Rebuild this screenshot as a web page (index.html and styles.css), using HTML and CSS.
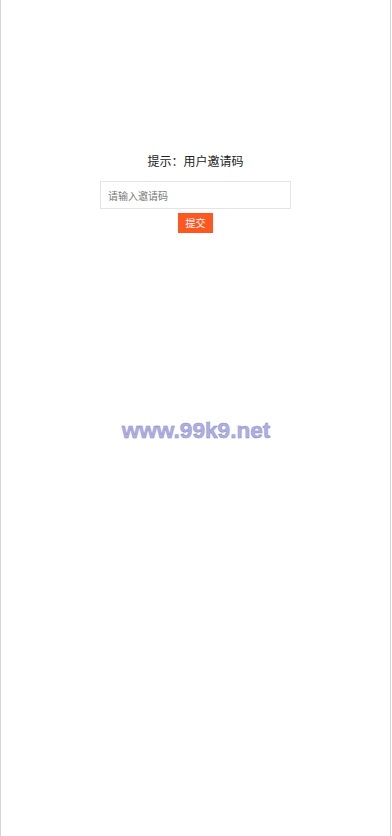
FILE: index.html
```html
<!DOCTYPE html>
<html lang="zh-CN">
<head>
<meta charset="utf-8">
<meta name="viewport" content="width=device-width, initial-scale=1">
<title>用户邀请码</title>
<link rel="stylesheet" href="styles.css">
</head>
<body>
<div class="page">
  <form class="form" onsubmit="return false">
    <div class="title">提示：用户邀请码</div>
    <input class="code" type="text" placeholder="请输入邀请码">
    <button class="btn" type="submit">提交</button>
  </form>
  <div class="mark">www.99k9.net</div>
</div>
</body>
</html>
```
FILE: styles.css
```css
html, body {
  margin: 0;
  padding: 0;
  background: #fff;
}
.page {
  position: relative;
  width: 389px;
  height: 836px;
  border-left: 1px solid #d4d4d4;
  border-right: 1px solid #d4d4d4;
  font-family: "Noto Sans CJK SC", "Noto Sans", sans-serif;
}
.form {
  margin: 0;
  padding-top: 150px;
  display: flex;
  flex-direction: column;
  align-items: center;
}
.title {
  font-size: 12px;
  line-height: 22px;
  height: 22px;
  color: #222;
}
.code {
  margin-top: 9px;
  box-sizing: border-box;
  width: 191px;
  height: 28px;
  border: 1px solid #e4e4e4;
  padding: 0 7px;
  font-family: inherit;
  font-size: 10px;
  color: #333;
  outline: none;
}
.code::placeholder {
  color: #777;
}
.btn {
  margin-top: 4px;
  box-sizing: border-box;
  width: 35px;
  height: 20px;
  border: none;
  padding: 0;
  background: #ff5722;
  color: #fff;
  font-family: inherit;
  font-size: 10px;
  line-height: 20px;
}
.mark {
  position: absolute;
  left: 1px;
  right: 0;
  top: 417px;
  text-align: center;
  font-family: "Liberation Sans", Arial, sans-serif;
  font-weight: bold;
  font-size: 22.6px;
  line-height: 28px;
  color: #b0b0e2;
  -webkit-text-stroke: 0.5px #8c8cc8;
}
```
